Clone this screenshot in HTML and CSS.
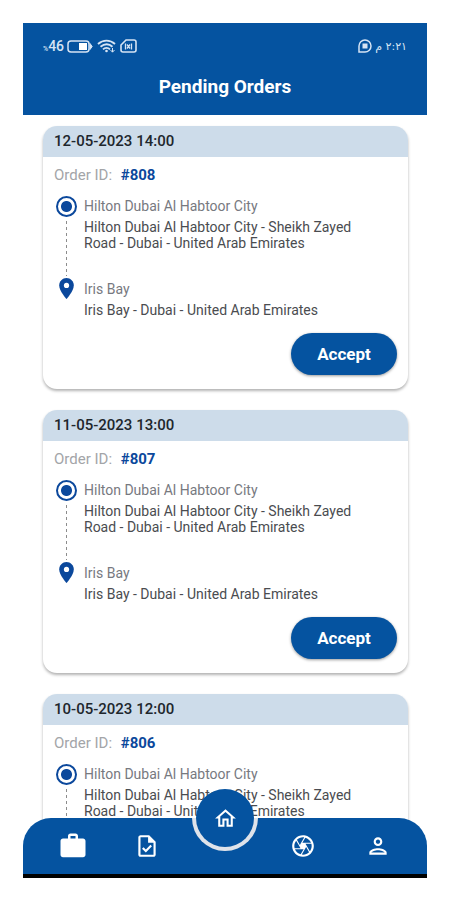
FILE: index.html
```html
<!DOCTYPE html>
<html lang="en">
<head>
<meta charset="utf-8">
<meta name="viewport" content="width=device-width, initial-scale=1">
<title>Pending Orders</title>
<link rel="stylesheet" href="styles.css">
</head>
<body>
<svg class="sprite" aria-hidden="true">
  <symbol id="pin" viewBox="0 0 24 24"><path d="M12 2C8.130 2 5 5.130 5 9c0 5.250 7 13 7 13s7-7.750 7-13c0-3.870-3.130-7-7-7z"/><circle cx="12" cy="9" r="2.500" fill="#fff"/></symbol>
</svg>
<div class="phone">
  <header class="top">
    <div class="status">
      <div class="status-group">
        <span class="battery-text"><small>%</small>46</span>
        <svg width="26" height="13" viewBox="0 0 26 13" fill="none" stroke="#d6e4f4" stroke-width="1.500"><rect x="1" y="1" width="21" height="11" rx="3"/><path d="M23 3.500l2.200 3-2.200 3z" fill="#d6e4f4" stroke-width="1"/><rect x="12" y="3" width="8" height="7" fill="#fff" stroke="none"/></svg>
        <svg class="wifi" width="19" height="14" viewBox="0 0 19 14" fill="none" stroke="#d6e4f4" stroke-width="1.900"><path d="M1 5c5-4.500 12-4.500 17 0M3.500 7.800c4-3.300 8.500-3.300 12 0M6 10.400c2-2 5-2 7 0"/><circle cx="9.500" cy="12" r="1.300" fill="#d6e4f4" stroke="none"/><path d="M15.500 9v4M13.500 11l2 2.200 2-2.200" stroke-width="1"/></svg>
        <svg width="17" height="14" viewBox="0 0 17 14" fill="none" stroke="#d6e4f4" stroke-width="1.600"><path d="M6 1h8a2 2 0 0 1 2 2v8a2 2 0 0 1-2 2H3a2 2 0 0 1-2-2V6z"/><path d="M5.500 4.500v6M11.500 4.500v6" stroke-width="1.300"/><path d="M7 5.500l3 4M10 5.500l-3 4" stroke-width="1.300"/></svg>
      </div>
      <div class="status-group">
        <svg width="14" height="14" viewBox="0 0 14 14" fill="none" stroke="#d6e4f4" stroke-width="1.500"><path d="M1 13V7a6 6 0 1 1 6 6z"/><rect x="4.500" y="4.500" width="5" height="5" fill="#d6e4f4" stroke="none"/></svg>
        <time class="clock" dir="rtl" lang="ar">٢:٢١ م</time>
      </div>
    </div>
    <h1>Pending Orders</h1>
  </header>

  <main class="orders">
    <article class="card">
      <h2>12-05-2023 14:00</h2>
      <div class="card-body">
        <p class="order-id">Order ID: <b>#808</b></p>
        <div class="route">
          <div class="track"><span class="origin"></span><span class="dots"></span></div>
          <div class="stop"><h3>Hilton Dubai Al Habtoor City</h3><p>Hilton Dubai Al Habtoor City - Sheikh Zayed Road - Dubai - United Arab Emirates</p></div>
          <div class="track"><svg class="pin"><use href="#pin"/></svg></div>
          <div class="stop last"><h3>Iris Bay</h3><p>Iris Bay - Dubai - United Arab Emirates</p></div>
        </div>
        <button class="accept" type="button">Accept</button>
      </div>
    </article>
    <article class="card">
      <h2>11-05-2023 13:00</h2>
      <div class="card-body">
        <p class="order-id">Order ID: <b>#807</b></p>
        <div class="route">
          <div class="track"><span class="origin"></span><span class="dots"></span></div>
          <div class="stop"><h3>Hilton Dubai Al Habtoor City</h3><p>Hilton Dubai Al Habtoor City - Sheikh Zayed Road - Dubai - United Arab Emirates</p></div>
          <div class="track"><svg class="pin"><use href="#pin"/></svg></div>
          <div class="stop last"><h3>Iris Bay</h3><p>Iris Bay - Dubai - United Arab Emirates</p></div>
        </div>
        <button class="accept" type="button">Accept</button>
      </div>
    </article>
    <article class="card">
      <h2>10-05-2023 12:00</h2>
      <div class="card-body">
        <p class="order-id">Order ID: <b>#806</b></p>
        <div class="route">
          <div class="track"><span class="origin"></span><span class="dots"></span></div>
          <div class="stop"><h3>Hilton Dubai Al Habtoor City</h3><p>Hilton Dubai Al Habtoor City - Sheikh Zayed Road - Dubai - United Arab Emirates</p></div>
        </div>
      </div>
    </article>
  </main>

  <nav class="bar" aria-label="Main">
    <a href="#orders" aria-label="Orders"><svg class="work" viewBox="0 0 24 24"><path d="M20 6h-4V4c0-1.110-.890-2-2-2h-4c-1.110 0-2 .890-2 2v2H4c-1.110 0-1.990.890-1.990 2L2 19c0 1.110.890 2 2 2h16c1.110 0 2-.890 2-2V8c0-1.110-.890-2-2-2zm-6 0h-4V4h4v2z"/></svg></a>
    <a href="#tasks" aria-label="Tasks"><svg viewBox="0 0 24 24"><path d="M14 2H6c-1.100 0-1.990.9-1.990 2L4 20c0 1.100.890 2 1.990 2H18c1.100 0 2-.9 2-2V8l-6-6zm4 18H6V4h7v5h5v11zM8.820 13.050L7.400 14.460 10.940 18l5.660-5.660-1.410-1.410-4.240 4.240z"/></svg></a>
    <span class="slot"><a class="home" href="#home" aria-label="Home"><svg viewBox="0 0 24 24"><path d="M12 5.690l5 4.500V18h-2v-6H9v6H7v-7.810l5-4.500M12 3L2 12h3v8h6v-6h2v6h6v-8h3L12 3z"/></svg></a></span>
    <a href="#camera" aria-label="Camera"><svg viewBox="0 0 24 24"><path d="M14.250 2.260l-.080-.040-.010.020C13.460 2.090 12.740 2 12 2 6.480 2 2 6.480 2 12s4.480 10 10 10 10-4.480 10-10c0-4.750-3.310-8.720-7.750-9.740zM19.410 9h-7.990l2.710-4.700c2.400.660 4.350 2.420 5.280 4.700zM13.100 4.080L10.270 9l-1.150 2L6.400 6.300C7.840 4.880 9.820 4 12 4c.370 0 .740.030 1.100.080zM5.700 7.090L8.540 12l1.150 2H4.260C4.100 13.360 4 12.690 4 12c0-1.850.640-3.550 1.700-4.910zM4.590 15h7.980l-2.710 4.700c-2.400-.670-4.340-2.420-5.270-4.700zm6.310 4.910L14.890 13l2.720 4.700C16.160 19.120 14.180 20 12 20c-.380 0-.740-.040-1.100-.090zm7.400-3l-4-6.910h5.430c.170.640.270 1.310.270 2 0 1.850-.640 3.550-1.700 4.910z"/></svg></a>
    <a href="#profile" aria-label="Profile"><svg viewBox="0 0 24 24"><path d="M12 6c1.100 0 2 .9 2 2s-.9 2-2 2-2-.9-2-2 .9-2 2-2m0 10c2.700 0 5.800 1.290 6 2H6c.230-.720 3.310-2 6-2m0-12C9.790 4 8 5.790 8 8s1.790 4 4 4 4-1.790 4-4-1.790-4-4-4zm0 10c-2.670 0-8 1.340-8 4v2h16v-2c0-2.660-5.330-4-8-4z"/></svg></a>
  </nav>
</div>
</body>
</html>
```
FILE: styles.css
```css
:root {
  --blue: #0553a0;
  --blue-dark: #0b489c;
}

* {
  box-sizing: border-box;
  margin: 0;
}

body {
  padding: 23px;
  background: #fff;
  font-family: Roboto, "Liberation Sans", sans-serif;
  font-size: 15px;
  color: #4a4c50;
}

.sprite {
  position: absolute;
  width: 0;
  height: 0;
}

.phone {
  position: relative;
  height: calc(100vh - 45px);
  overflow: hidden;
}

.top {
  height: 92px;
  padding: 14px 20px 0;
  background: var(--blue);
  color: #fff;
}

.status,
.status-group {
  display: flex;
  align-items: center;
}

.status {
  justify-content: space-between;
  height: 18px;
}

.status-group {
  gap: 3px;
}

.wifi {
  margin: 0 1px;
}

.battery-text {
  font-size: 14px;
  font-weight: 500;
  color: #d6e4f4;
}

.battery-text small {
  font-size: 7px;
}

.clock {
  font-family: "DejaVu Sans", sans-serif;
  font-size: 11px;
  color: #d6e4f4;
}

h1 {
  margin-top: 20px;
  font-size: 19px;
  font-weight: 700;
  line-height: 24px;
  text-align: center;
}

.orders {
  display: flex;
  flex-direction: column;
  gap: 21px;
  padding: 11px 19px 0 20px;
}

.card {
  border-radius: 14px;
  background: #fff;
  box-shadow: 0 2px 3px rgba(0, 0, 0, 0.3);
}

.card h2 {
  padding: 0 11px;
  border-radius: 14px 14px 0 0;
  background: #cddcea;
  font-size: 15px;
  font-weight: 500;
  line-height: 31px;
  color: #20262c;
}

.card-body {
  display: flex;
  flex-direction: column;
  padding: 9px 11px 14px;
}

.order-id {
  line-height: 18px;
  color: #a3a5a8;
}

.order-id b {
  margin-left: 5px;
  font-weight: 700;
  color: var(--blue-dark);
}

.route {
  display: grid;
  grid-template-columns: 24px 1fr;
  column-gap: 6px;
  margin-top: 12px;
}

.track {
  display: flex;
  flex-direction: column;
  align-items: center;
}

.origin {
  width: 21px;
  height: 21px;
  border: 2px solid var(--blue-dark);
  border-radius: 50%;
  background: radial-gradient(circle, var(--blue-dark) 5px, #fff 6px);
}

.dots {
  flex: 1;
  width: 1px;
  margin: 4px 0 3px;
  background: repeating-linear-gradient(#8c8c8c 0 3px, transparent 3px 6px);
}

.pin {
  width: 25px;
  height: 25px;
  margin-top: -3px;
  fill: var(--blue-dark);
}

.stop {
  min-height: 83px;
  padding-right: 24px;
  font-size: 14px;
}

.stop.last {
  min-height: 54px;
}

.stop h3 {
  font-size: 14px;
  font-weight: 400;
  line-height: 20px;
  color: #77797f;
}

.stop p {
  margin-top: 3px;
  line-height: 16px;
}

.accept {
  align-self: flex-end;
  width: 106px;
  height: 42px;
  border: 0;
  border-radius: 21px;
  background: var(--blue);
  box-shadow: 0 1px 3px rgba(0, 0, 0, 0.4);
  font: 700 17px Roboto, sans-serif;
  color: #fff;
}

.bar {
  position: absolute;
  right: 0;
  bottom: 0;
  left: 0;
  display: flex;
  align-items: center;
  justify-content: space-between;
  height: 60px;
  padding: 0 36px;
  border-bottom: 4px solid #000;
  border-radius: 28px 28px 0 0;
  background: var(--blue);
}

.bar a {
  display: flex;
  align-items: center;
  justify-content: center;
  width: 27px;
  height: 27px;
}

.bar svg {
  width: 26px;
  height: 26px;
  fill: #fff;
}

.bar .work {
  width: 30px;
  height: 30px;
  flex: none;
}

.slot {
  position: relative;
  width: 35px;
  height: 100%;
}

.slot::before {
  content: "";
  position: absolute;
  top: 0;
  left: 50%;
  width: 66px;
  height: 33px;
  margin-left: -33px;
  border-radius: 0 0 33px 33px;
  background: #dfe3ea;
}

.bar .home {
  position: absolute;
  top: -29px;
  left: 50%;
  width: 58px;
  height: 58px;
  margin-left: -29px;
  border-radius: 50%;
  background: var(--blue);
}

.bar .home svg {
  width: 25px;
  height: 25px;
}
```
